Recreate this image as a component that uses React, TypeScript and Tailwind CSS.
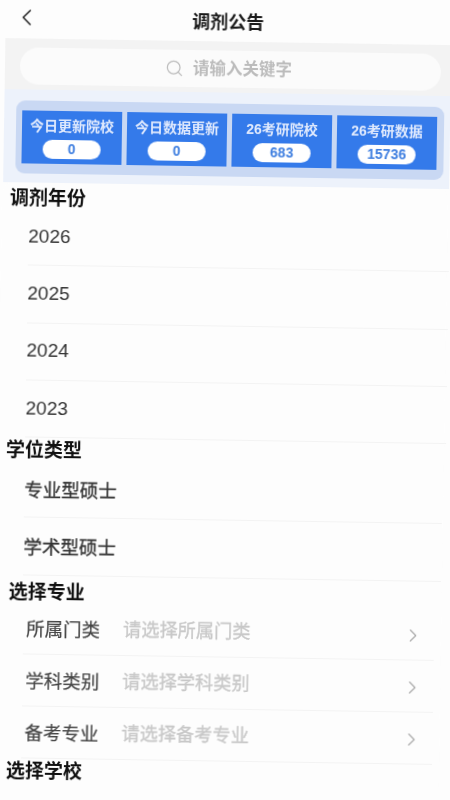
import { ChevronLeft, ChevronRight, Search } from 'lucide-react';

const stats = [
  { label: '今日更新院校', value: '0' },
  { label: '今日数据更新', value: '0' },
  { label: '26考研院校', value: '683' },
  { label: '26考研数据', value: '15736' },
];

const years = ['2026', '2025', '2024', '2023'];
const degrees = ['专业型硕士', '学术型硕士'];
const majors = [
  { label: '所属门类', hint: '请选择所属门类' },
  { label: '学科类别', hint: '请选择学科类别' },
  { label: '备考专业', hint: '请选择备考专业' },
];

function SectionTitle({ text, className }: { text: string; className: string }) {
  return <h3 className={`text-[19px] leading-[20px] font-bold text-[#111] ${className}`}>{text}</h3>;
}

export default function App() {
  return (
    <div className="h-[800px] w-[450px] overflow-hidden bg-[#fdfdfd] font-['Liberation_Sans','Noto_Sans_CJK_SC',sans-serif]">
      <div className="h-[812px] w-[460px] origin-top-left rotate-[0.9deg] blur-[0.4px]">
        <header className="relative flex h-[38px] items-center justify-center pr-[3px]">
          <ChevronLeft className="absolute top-[3px] left-[13px] h-[28px] w-[28px] text-[#222]" strokeWidth={1.3} />
          <span className="text-[18px] font-bold text-[#1a1a1a]">调剂公告</span>
        </header>

        <div className="ml-[6px] flex h-[51px] w-[446px] items-start bg-[#f3f3f3] pt-[9px] pl-[15px]">
          <div className="flex h-[37px] w-[421px] items-center justify-center gap-[9px] rounded-full bg-[#fbfbfb] pr-[4px]">
            <Search className="h-[19px] w-[19px] text-[#bdbdbd]" strokeWidth={1.6} />
            <span className="text-[16.5px] font-bold text-[#bcbcbc]">请输入关键字</span>
          </div>
        </div>

        <div className="ml-[6px] h-[93px] w-[446px] bg-[#edf2fb] pt-[11px] pl-[12px]">
          <div className="flex h-[73px] w-[428px] items-center gap-[5px] rounded-[9px] bg-[#c9d8f3] pl-[6px]">
            {stats.map((s) => (
              <div key={s.label} className="flex h-[53px] w-[100px] flex-col items-center bg-[#347aea] pt-[5px]">
                <span className="text-[14px] leading-[20px] font-bold text-[#dfe9fd]">{s.label}</span>
                <span className="mt-[4px] flex h-[19px] w-[58px] items-center justify-center rounded-full bg-white text-[14px] font-bold text-[#3f7fe0]">
                  {s.value}
                </span>
              </div>
            ))}
          </div>
        </div>

        <main className="ml-[5px] flex h-[630px] w-[446px] flex-col rounded-t-[10px] bg-[#fdfdfd] pt-[6px]">
          <SectionTitle text="调剂年份" className="ml-[8px]" />
          <div className="ml-[27px] w-[421px]">
            {years.map((y) => (
              <div key={y} className="flex h-[57.3px] items-center border-b border-[#f3f3f3] text-[19px] text-[#333]">
                {y}
              </div>
            ))}
          </div>
          <SectionTitle text="学位类型" className="mt-[3px] ml-[8px]" />
          <div className="ml-[27px] w-[418px]">
            {degrees.map((d) => (
              <div key={d} className="flex h-[57.3px] items-center border-b border-[#f3f3f3] pt-[3px] text-[18.5px] [-webkit-text-stroke:0.3px_#333] text-[#333]">
                {d}
              </div>
            ))}
          </div>
          <SectionTitle text="选择专业" className="mt-[7px] ml-[13px]" />
          <div className="ml-[28px] w-[411px]">
            {majors.map((m) => (
              <div key={m.label} className="flex h-[52px] items-center border-b border-[#f3f3f3] pt-[3px] pl-[3px]">
                <span className="w-[97px] text-[18.5px] [-webkit-text-stroke:0.2px_#444] text-[#444]">{m.label}</span>
                <span className="text-[18.2px] [-webkit-text-stroke:0.3px_#c8c8c8] text-[#c8c8c8]">{m.hint}</span>
                <ChevronRight className="mr-[10px] ml-auto h-[22px] w-[22px] text-[#a8a8a8]" strokeWidth={1.2} />
              </div>
            ))}
          </div>
          <SectionTitle text="选择学校" className="mt-[3px] ml-[13px]" />
        </main>
      </div>
    </div>
  );
}
